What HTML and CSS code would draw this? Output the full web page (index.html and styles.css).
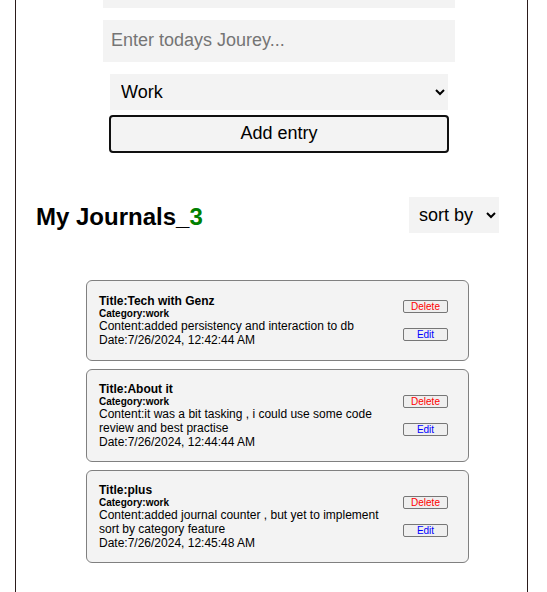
FILE: index.html
```html
<!DOCTYPE html>
<html lang="en">
<head>
<meta charset="utf-8">
<title>My Journals</title>
<link rel="stylesheet" href="styles.css">
</head>
<body>
<main class="app">
  <form class="entry-form">
    <input class="field title-field" type="text" aria-label="Title">
    <input class="field" type="text" placeholder="Enter todays Jourey..." aria-label="Journal entry">
    <select class="select category" aria-label="Category">
      <option>Work</option>
      <option>Personal</option>
      <option>Travel</option>
    </select>
    <button class="add" type="button">Add entry</button>
  </form>
  <header class="list-header">
    <h2 class="heading">My Journals_<span class="count">3</span></h2>
    <select class="select sort" aria-label="Sort journals">
      <option>sort by</option>
      <option>date</option>
    </select>
  </header>
  <section class="journals">
    <article class="card">
      <div class="details">
        <h3 class="title">Title:Tech with Genz</h3>
        <h4 class="tag">Category:work</h4>
        <p class="text">Content:added persistency and interaction to db</p>
        <p class="text">Date:7/26/2024, 12:42:44 AM</p>
      </div>
      <div class="actions">
        <button class="action delete" type="button">Delete</button>
        <button class="action edit" type="button">Edit</button>
      </div>
    </article>
    <article class="card">
      <div class="details">
        <h3 class="title">Title:About it</h3>
        <h4 class="tag">Category:work</h4>
        <p class="text">Content:it was a bit tasking , i could use some code review and best practise</p>
        <p class="text">Date:7/26/2024, 12:44:44 AM</p>
      </div>
      <div class="actions">
        <button class="action delete" type="button">Delete</button>
        <button class="action edit" type="button">Edit</button>
      </div>
    </article>
    <article class="card">
      <div class="details">
        <h3 class="title">Title:plus</h3>
        <h4 class="tag">Category:work</h4>
        <p class="text">Content:added journal counter , but yet to implement sort by category feature</p>
        <p class="text">Date:7/26/2024, 12:45:48 AM</p>
      </div>
      <div class="actions">
        <button class="action delete" type="button">Delete</button>
        <button class="action edit" type="button">Edit</button>
      </div>
    </article>
  </section>
</main>
</body>
</html>
```
FILE: styles.css
```css
* {
  box-sizing: border-box;
  margin: 0;
}

body {
  background: #fff;
  color: #000;
  font-family: "Liberation Sans", Arial, sans-serif;
}

.app {
  min-height: 100vh;
  margin: 0 19px 0 15px;
  padding-bottom: 29px;
  border: solid #2b1b1b;
  border-width: 0 1px;
}

.entry-form {
  display: flex;
  flex-direction: column;
  margin: 0 72px 0 87px;
}

.field,
.select,
.add,
.action {
  font-family: inherit;
}

.field {
  height: 42px;
  margin-bottom: 12px;
  padding: 0 8px 2px;
  border: 0;
  border-radius: 0;
  background: #f3f3f3;
  font-size: 18px;
}

.field::placeholder {
  color: #757575;
}

.title-field {
  height: 8px;
}

.select {
  height: 36px;
  border: 0;
  border-radius: 0;
  background: #f3f3f3;
  color: #000;
  font-size: 18px;
}

.category {
  margin: 0 7px 5px;
  padding: 0 0 0 7px;
}

.add {
  height: 38px;
  margin: 0 6px;
  padding: 0 0 2px;
  border: 2px solid #101010;
  border-radius: 4px;
  background: #f3f3f3;
  color: #000;
  font-size: 18px;
}

.list-header {
  display: flex;
  justify-content: space-between;
  align-items: center;
  margin: 44px 28px 47px 20px;
}

.heading {
  padding-top: 4px;
  font-size: 24px;
  line-height: 28px;
}

.count {
  color: green;
}

.sort {
  width: 90px;
  padding: 0 0 0 6px;
}

.journals {
  display: flex;
  flex-direction: column;
  gap: 8px;
  margin: 0 58px 0 70px;
}

.card {
  display: flex;
  align-items: center;
  justify-content: space-between;
  gap: 20px;
  min-height: 81px;
  padding: 12px 20px 12px 12px;
  border: 1px solid #808080;
  border-radius: 6px;
  background: #f3f3f3;
}

.title,
.text {
  font-size: 12px;
  line-height: 14px;
}

.text {
  font-weight: 400;
}

.tag {
  font-size: 10px;
  line-height: 11px;
}

.actions {
  display: flex;
  flex-direction: column;
  flex: none;
  gap: 15px;
  width: 45px;
}

.action {
  height: 13px;
  padding: 0;
  border: 1px solid #767676;
  border-radius: 2px;
  background: #efefef;
  font-size: 10px;
  line-height: 11px;
}

.delete {
  color: red;
}

.edit {
  color: blue;
}
```
